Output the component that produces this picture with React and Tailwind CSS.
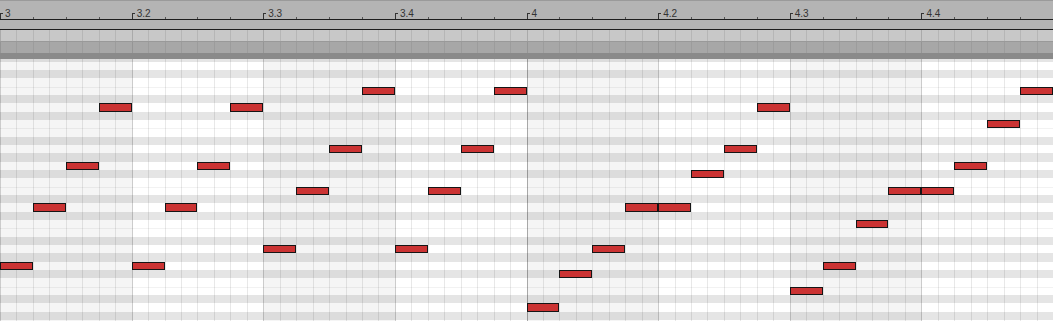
const beats = ['3', '3.2', '3.3', '3.4', '4', '4.2', '4.3', '4.4'];

// [sixteenth index, pitch row]
const notes = [
  [0, 25], [1, 18], [2, 13], [3, 6], [4, 25], [5, 18], [6, 13], [7, 6],
  [8, 23], [9, 16], [10, 11], [11, 4], [12, 23], [13, 16], [14, 11], [15, 4],
  [16, 30], [17, 26], [18, 23], [19, 18], [20, 18], [21, 14], [22, 11], [23, 6],
  [24, 28], [25, 25], [26, 20], [27, 16], [28, 16], [29, 13], [30, 8], [31, 4],
  [32, 25],
];

const STEP = 1053 / 32;
const ROW = 25 / 3;
const blackKeys = [0, 2, 5, 7, 10];

const Ruler = () => (
  <div className="border-t border-[#9a9a9a] bg-[#b4b4b4]">
    <div className="flex h-[19px] border-b border-[#1e1e1e]">
      {beats.map((b) => (
        <div key={b} className="flex flex-1">
          {[0, 1, 2, 3].map((q) => (
            <div key={q} className="flex flex-1 items-end">
              {q === 0 ? (
                <div className="flex items-end gap-[2px]">
                  <div className="h-[6px] w-[3px] border-l border-t border-[#333]" />
                  <span className="text-[10px] leading-[10px] text-[#333]">{b}</span>
                </div>
              ) : (
                <div className="h-[2px] w-px bg-[#555]" />
              )}
            </div>
          ))}
        </div>
      ))}
    </div>
    <div className="h-[10px] border-b border-[#1e1e1e]" />
  </div>
);

const Lane = ({ className, line, beatLine }) => (
  <div className={`flex ${className}`}>
    {beats.map((b) => (
      <div key={b} className="flex flex-1">
        {Array.from({ length: 8 }).map((_, j) => (
          <div key={j} className={`flex-1 border-l ${j === 0 ? beatLine : line}`} />
        ))}
      </div>
    ))}
  </div>
);

const Grid = () => (
  <div className="relative h-[262px] overflow-hidden">
    {/* beat columns */}
    <div className="flex h-full">
      {beats.map((b, i) => (
        <div key={b} className={`flex flex-1 ${i % 2 === 0 ? 'bg-[#f5f5f5]' : 'bg-white'}`}>
          {Array.from({ length: 8 }).map((_, j) => (
            <div
              key={j}
              className={`flex-1 border-l ${
                j === 0
                  ? i === 4
                    ? 'border-[#a8a8a8]'
                    : 'border-[#cccccc]'
                  : i % 2 === 0
                  ? 'border-[#dfdfdf]'
                  : 'border-[#e8e8e8]'
              }`}
            />
          ))}
        </div>
      ))}
    </div>

    {/* key rows */}
    <div className="absolute inset-x-0 top-0 mt-[-5.667px] flex flex-col">
      {Array.from({ length: 33 }).map((_, k) => (
        <div
          key={k}
          className={`h-[8.3333px] shrink-0 ${
            blackKeys.includes(k % 12)
              ? 'bg-black/10'
              : k % 12 === 4 || k % 12 === 9
              ? 'border-t border-black/[0.05]'
              : ''
          }`}
        />
      ))}
    </div>

    {/* notes */}
    {notes.map(([i, k]) => (
      <div
        key={i}
        className="absolute border border-[#151515] bg-[#cb3333]"
        style={{ left: i * STEP, top: 53.333 + k * ROW - 59, width: STEP, height: ROW }}
      />
    ))}
  </div>
);

export default function App() {
  return (
    <div className="h-[321px] w-[1053px] overflow-hidden bg-white font-['Liberation_Sans',Arial,sans-serif]">
      <Ruler />
      <Lane className="h-[12px] border-b border-[#999] bg-[#c8c8c8]" line="border-[#b6b6b6]" beatLine="border-[#aaaaaa]" />
      <Lane className="h-[11px] bg-[#a7a7a7]" line="border-[#9c9c9c]" beatLine="border-[#959595]" />
      <div className="h-[6px] bg-[#8a8a8a]" />
      <Grid />
    </div>
  );
}
